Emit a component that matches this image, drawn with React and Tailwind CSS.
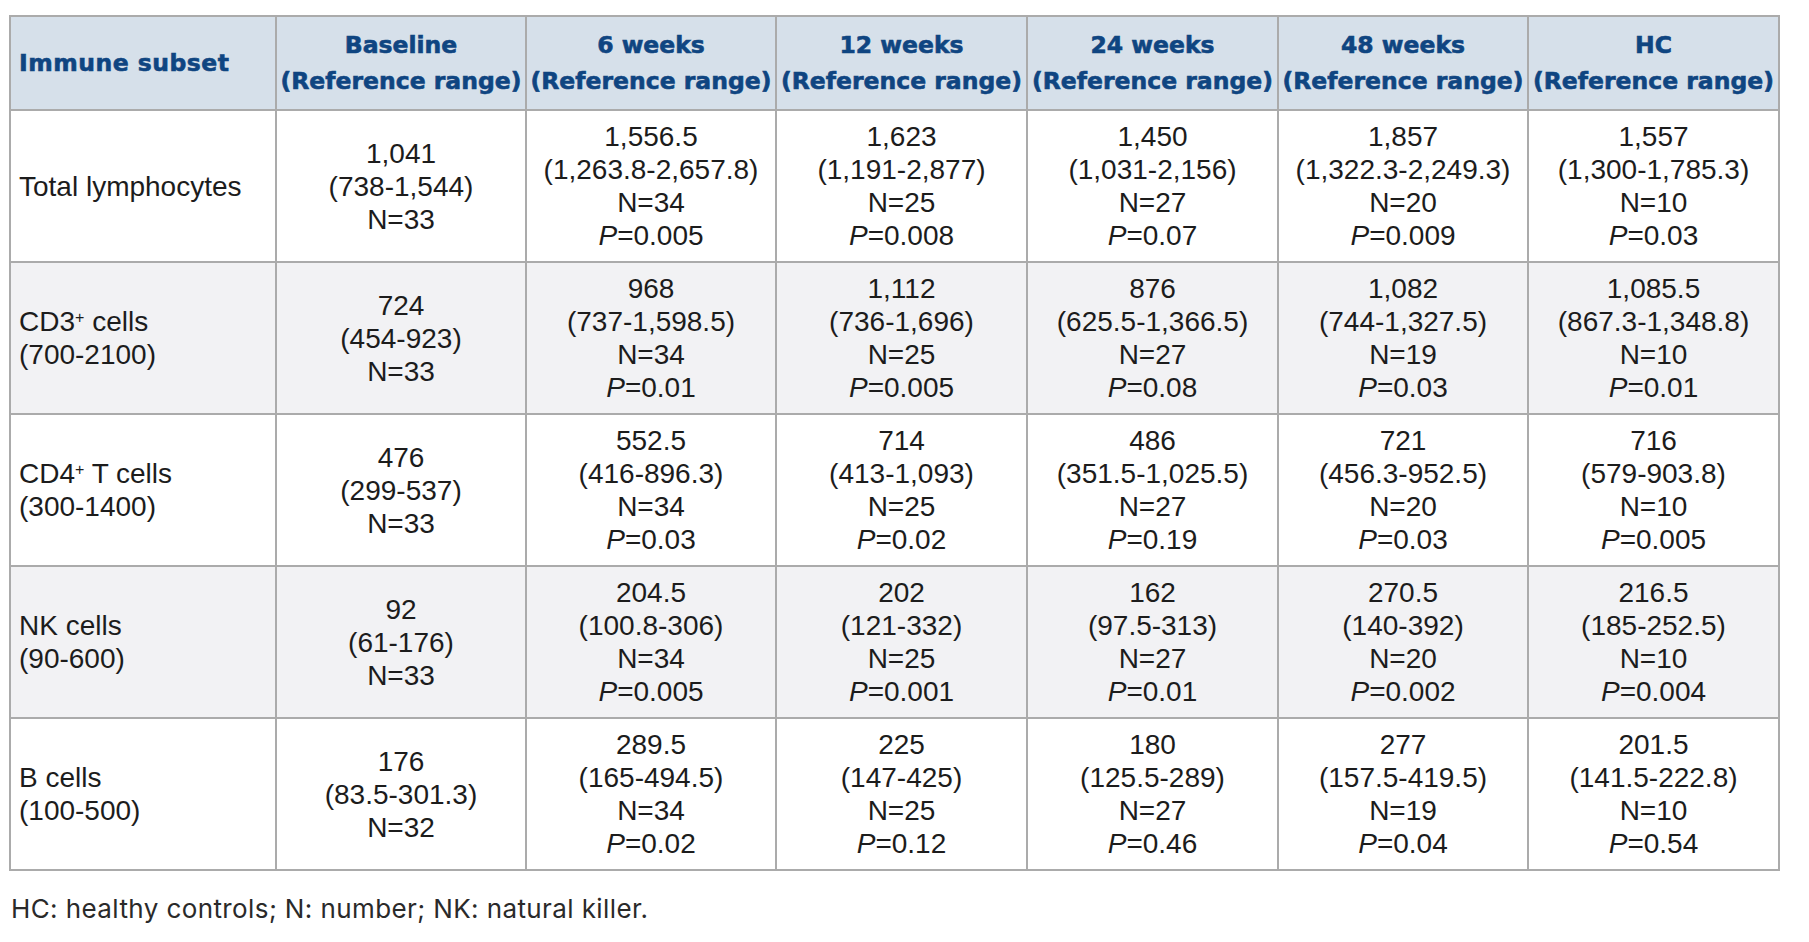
import React from "react";

const cols = [
  ["Baseline", "(Reference range)"],
  ["6 weeks", "(Reference range)"],
  ["12 weeks", "(Reference range)"],
  ["24 weeks", "(Reference range)"],
  ["48 weeks", "(Reference range)"],
  ["HC", "(Reference range)"],
];

const Sup = () => <sup className="text-[16px]">+</sup>;

const rows = [
  {
    label: [<>Total lymphocytes</>],
    cells: [
      ["1,041", "(738-1,544)", "N=33"],
      ["1,556.5", "(1,263.8-2,657.8)", "N=34", "0.005"],
      ["1,623", "(1,191-2,877)", "N=25", "0.008"],
      ["1,450", "(1,031-2,156)", "N=27", "0.07"],
      ["1,857", "(1,322.3-2,249.3)", "N=20", "0.009"],
      ["1,557", "(1,300-1,785.3)", "N=10", "0.03"],
    ],
  },
  {
    label: [<>CD3<Sup /> cells</>, <>(700-2100)</>],
    cells: [
      ["724", "(454-923)", "N=33"],
      ["968", "(737-1,598.5)", "N=34", "0.01"],
      ["1,112", "(736-1,696)", "N=25", "0.005"],
      ["876", "(625.5-1,366.5)", "N=27", "0.08"],
      ["1,082", "(744-1,327.5)", "N=19", "0.03"],
      ["1,085.5", "(867.3-1,348.8)", "N=10", "0.01"],
    ],
  },
  {
    label: [<>CD4<Sup /> T cells</>, <>(300-1400)</>],
    cells: [
      ["476", "(299-537)", "N=33"],
      ["552.5", "(416-896.3)", "N=34", "0.03"],
      ["714", "(413-1,093)", "N=25", "0.02"],
      ["486", "(351.5-1,025.5)", "N=27", "0.19"],
      ["721", "(456.3-952.5)", "N=20", "0.03"],
      ["716", "(579-903.8)", "N=10", "0.005"],
    ],
  },
  {
    label: [<>NK cells</>, <>(90-600)</>],
    cells: [
      ["92", "(61-176)", "N=33"],
      ["204.5", "(100.8-306)", "N=34", "0.005"],
      ["202", "(121-332)", "N=25", "0.001"],
      ["162", "(97.5-313)", "N=27", "0.01"],
      ["270.5", "(140-392)", "N=20", "0.002"],
      ["216.5", "(185-252.5)", "N=10", "0.004"],
    ],
  },
  {
    label: [<>B cells</>, <>(100-500)</>],
    cells: [
      ["176", "(83.5-301.3)", "N=32"],
      ["289.5", "(165-494.5)", "N=34", "0.02"],
      ["225", "(147-425)", "N=25", "0.12"],
      ["180", "(125.5-289)", "N=27", "0.46"],
      ["277", "(157.5-419.5)", "N=19", "0.04"],
      ["201.5", "(141.5-222.8)", "N=10", "0.54"],
    ],
  },
];

const headFont = { fontFamily: '"DejaVu Sans", sans-serif' };

export default function App() {
  return (
    <div className="bg-white w-[1809px] h-[942px] pt-[15px] pl-[9px]">
      <table
        className="table-fixed border-collapse w-[1771px] text-[#1c1c1c]"
        style={{ fontFamily: '"Liberation Sans", Arial, sans-serif' }}
      >
        <colgroup>
          <col className="w-[266px]" />
          <col className="w-[250px]" />
          <col className="w-[250px]" />
          <col className="w-[251px]" />
          <col className="w-[251px]" />
          <col className="w-[250px]" />
          <col className="w-[251px]" />
        </colgroup>
        <thead>
          <tr className="h-[94px] bg-[#d6e0ea]">
            <th
              className="border-2 border-[#ababab] text-left align-middle pl-[8px] font-bold text-[#0f4581] text-[23.5px] leading-[36px] tracking-[0.5px] [-webkit-text-stroke:0.6px_#0f4581]"
              style={headFont}
            >
              Immune subset
            </th>
            {cols.map((c, i) => (
              <th
                key={i}
                className="border-2 border-[#ababab] text-center align-middle font-bold text-[#0f4581] text-[23.5px] leading-[36px] whitespace-nowrap [-webkit-text-stroke:0.6px_#0f4581]"
                style={headFont}
              >
                <div>{c[0]}</div>
                <div>{c[1]}</div>
              </th>
            ))}
          </tr>
        </thead>
        <tbody>
          {rows.map((r, ri) => (
            <tr key={ri} className={`h-[152px] ${ri % 2 === 1 ? "bg-[#f2f2f4]" : "bg-white"}`}>
              <td className="border-2 border-[#ababab] text-left align-middle pl-[8px] text-[28px] leading-[33px]">
                {r.label.map((l, li) => (
                  <div key={li}>{l}</div>
                ))}
              </td>
              {r.cells.map((c, ci) => (
                <td
                  key={ci}
                  className="border-2 border-[#ababab] text-center align-middle text-[28px] leading-[33px] whitespace-nowrap"
                >
                  <div>{c[0]}</div>
                  <div>{c[1]}</div>
                  <div>{c[2]}</div>
                  {c[3] && (
                    <div>
                      <i>P</i>={c[3]}
                    </div>
                  )}
                </td>
              ))}
            </tr>
          ))}
        </tbody>
      </table>
      <p
        className="mt-[22px] ml-[2px] text-[26px] leading-[32px] tracking-[0.4px] text-[#2a2a2a]"
        style={{ fontFamily: "Inter, sans-serif" }}
      >
        HC: healthy controls; N: number; NK: natural killer.
      </p>
    </div>
  );
}
